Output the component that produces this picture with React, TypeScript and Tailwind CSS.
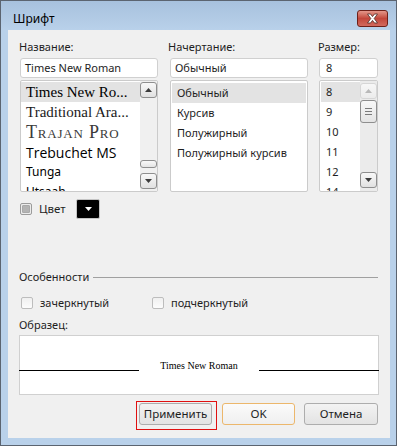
import React from "react";

const UI = "font-['Noto_Sans',sans-serif]";

function Arrow({ up, disabled }: { up?: boolean; disabled?: boolean }) {
  return (
    <div
      className={`w-[17px] h-[16px] rounded-[3px] border flex items-center justify-center ${
        disabled
          ? "border-[#d6d6d6] bg-linear-to-b from-[#f7f7f7] to-[#ececec]"
          : "border-[#8e8e8e] bg-linear-to-b from-[#f8f8f8] to-[#e1e1e1]"
      }`}
    >
      <svg width="7" height="4" viewBox="0 0 7 4">
        {up ? (
          <path d="M0 4 L3.5 0 L7 4 Z" fill={disabled ? "#b9b9b9" : "#3c3c3c"} />
        ) : (
          <path d="M0 0 L3.5 4 L7 0 Z" fill={disabled ? "#b9b9b9" : "#3c3c3c"} />
        )}
      </svg>
    </div>
  );
}

function Check({ filled }: { filled?: boolean }) {
  return (
    <div
      className={`w-[12px] h-[12px] rounded-[2px] border flex items-center justify-center ${
        filled ? "border-[#9b9b9b] bg-[#ececec]" : "border-[#bdbdbd] bg-linear-to-b from-[#f0f0f0] to-[#fcfcfc]"
      }`}
    >
      {filled ? (
        <div className="w-[8px] h-[8px] rounded-[1px] bg-[#b3b3b3] border border-[#a9a9a9]" />
      ) : null}
    </div>
  );
}

function Btn({ children, def, w = "w-[73px]" }: { children: React.ReactNode; def?: boolean; w?: string }) {
  return (
    <div
      className={`${w} h-[22px] rounded-[3px] border flex items-center justify-center text-[11.5px] text-[#1e1e1e] ${
        def
          ? "border-[#ecb76c] bg-linear-to-b from-[#fbfbfb] to-[#efefef]"
          : "border-[#adadad] bg-linear-to-b from-[#f3f3f3] to-[#e3e3e3]"
      }`}
    >
      {children}
    </div>
  );
}

export default function App() {
  const styles = ["Обычный", "Курсив", "Полужирный", "Полужирный курсив"];
  const sizes = ["8", "9", "10", "11", "12", "14"];
  return (
    <div className={`w-[397px] h-[446px] bg-[#b9d1ea] border border-[#5b6470] flex flex-col ${UI}`}>
      {/* title bar */}
      <div className="h-[29px] flex items-start justify-between pl-[12px] pr-[8px] bg-linear-to-b from-[#a7c1dd] to-[#b9d1ea]">
        <div className="mt-[10px] text-[12px] leading-[16px] text-black">Шрифт</div>
        <div className="mt-[9px] w-[31px] h-[17px] rounded-[3px] border border-[#6e2019] flex items-center justify-center bg-linear-to-b from-[#e3968a] via-[#c2463b] to-[#d2695e]">
          <svg width="13" height="11" viewBox="0 0 13 11">
            <path
              d="M1.5 1 L4.5 1 L6.5 3.6 L8.5 1 L11.5 1 L8.2 5.5 L11.5 10 L8.5 10 L6.5 7.4 L4.5 10 L1.5 10 L4.8 5.5 Z"
              fill="#ffffff"
              stroke="#4a2a26"
              strokeWidth="0.8"
              strokeLinejoin="round"
            />
          </svg>
        </div>
      </div>
      {/* client */}
      <div className="ml-[7px] mr-[6px] h-[408px] bg-[#f0f0f0] flex flex-col px-[12px] pt-[9px] text-[11px] text-[#1e1e1e]">
        {/* top columns */}
        <div className="flex">
          {/* name */}
          <div className="w-[138px] flex flex-col">
            <div className="h-[16px] leading-[16px] -ml-px">Название:</div>
            <div className="mt-[3px] h-[20px] border border-[#d0d0d0] rounded-[3px] bg-white flex items-center pl-[4px]">
              Times New Roman
            </div>
            <div className="mt-[2px] h-[112px] border border-[#cbcbcb] rounded-[2px] bg-white flex overflow-hidden">
              <div className="flex-1 pt-px overflow-hidden text-black whitespace-nowrap">
                <div className="h-[20px] bg-[#e3e3e3] flex items-center pl-[5px] font-['Liberation_Serif',serif] text-[15px]">
                  Times New Ro...
                </div>
                <div className="h-[20px] flex items-center pl-[5px] font-['Liberation_Serif',serif] text-[15px] text-[#1a1a1a]">
                  Traditional Ara...
                </div>
                <div className="h-[20px] flex items-center pl-[5px] font-['Liberation_Serif',serif] text-[18px] [font-variant:small-caps] tracking-[0.8px] text-[#3a3a3a]">
                  Trajan Pro
                </div>
                <div className="h-[20px] flex items-center pl-[5px] font-['Open_Sans',sans-serif] text-[14px]">
                  Trebuchet MS
                </div>
                <div className="h-[20px] flex items-center pl-[5px] text-[12px]">Tunga</div>
                <div className="h-[20px] flex items-center pl-[5px] text-[12px]">Utsaah</div>
              </div>
              <div className="w-[17px] flex flex-col pt-px pb-[2px] bg-[#f0f0f0]">
                <Arrow up />
                <div className="flex-1 flex flex-col justify-end pb-[5px]">
                  <div className="h-[8px] rounded-[3px] border border-[#8e8e8e] bg-linear-to-b from-[#f8f8f8] to-[#e4e4e4]" />
                </div>
                <Arrow />
              </div>
            </div>
          </div>
          {/* style */}
          <div className="ml-[12px] w-[138px] flex flex-col">
            <div className="h-[16px] leading-[16px] -ml-[2px]">Начертание:</div>
            <div className="mt-[3px] h-[20px] border border-[#d0d0d0] rounded-[3px] bg-white flex items-center pl-[4px]">
              Обычный
            </div>
            <div className="mt-[2px] h-[112px] border border-[#cbcbcb] rounded-[2px] bg-white pt-[2px] px-px">
              {styles.map((s, i) => (
                <div
                  key={s}
                  className={`h-[20px] flex items-center pl-[5px] ${i === 0 ? "bg-[#e3e3e3]" : ""}`}
                >
                  {s}
                </div>
              ))}
            </div>
          </div>
          {/* size */}
          <div className="ml-[11px] w-[59px] flex flex-col">
            <div className="h-[16px] leading-[16px] -ml-px">Размер:</div>
            <div className="mt-[3px] h-[20px] border border-[#d0d0d0] rounded-[3px] bg-white flex items-center pl-[6px]">
              8
            </div>
            <div className="mt-[2px] h-[112px] border border-[#cbcbcb] rounded-[2px] bg-white flex overflow-hidden">
              <div className="flex-1 pt-px pl-px overflow-hidden">
                {sizes.map((s, i) => (
                  <div
                    key={s}
                    className={`h-[20px] flex items-center pl-[5px] ${i === 0 ? "bg-[#e3e3e3]" : ""}`}
                  >
                    {s}
                  </div>
                ))}
              </div>
              <div className="w-[17px] flex flex-col pt-[2px] pb-[3px] bg-[#ebebeb]">
                <Arrow up disabled />
                <div className="mt-[1px] h-[23px] rounded-[3px] border border-[#8e8e8e] bg-linear-to-b from-[#f8f8f8] to-[#e4e4e4] flex flex-col items-center justify-center gap-[2px]">
                  <div className="w-[7px] h-px bg-[#7a7a7a]" />
                  <div className="w-[7px] h-px bg-[#7a7a7a]" />
                  <div className="w-[7px] h-px bg-[#7a7a7a]" />
                </div>
                <div className="flex-1" />
                <Arrow />
              </div>
            </div>
          </div>
        </div>

        {/* color row */}
        <div className="mt-[7px] h-[20px] flex items-center">
          <Check filled />
          <div className="ml-[7px] w-[37px] text-[11.5px]">Цвет</div>
          <div className="w-[24px] h-[20px] border border-[#c4c4c4] rounded-[2px] bg-black flex items-center justify-center">
            <svg width="7" height="4" viewBox="0 0 7 4">
              <path d="M0 0 L3.5 4 L7 0 Z" fill="#ffffff" />
            </svg>
          </div>
        </div>

        {/* features */}
        <div className="mt-[50px] h-[16px] flex items-center -ml-px">
          <div className="w-[74px] whitespace-nowrap">Особенности</div>
          <div className="flex-1 h-px bg-[#a0a0a0]" />
        </div>
        <div className="mt-[10px] h-[16px] flex items-center">
          <div className="w-[131px] ml-px flex items-center">
            <Check />
            <div className="ml-[7px]">зачеркнутый</div>
          </div>
          <Check />
          <div className="ml-[7px]">подчеркнутый</div>
        </div>
        <div className="mt-[6px] h-[16px] leading-[16px] -ml-px">Образец:</div>
        <div className="mt-[2px] -ml-px w-[360px] h-[60px] border border-[#d0d0d0] bg-white">
          <div className="mt-[24px] -mx-px flex items-end">
            <div className="w-[120px] h-[1.5px] bg-black mb-[1px]" />
            <div className="flex-1 text-center font-['Liberation_Serif',serif] text-[10px] leading-[12px] text-black">
              Times New Roman
            </div>
            <div className="w-[120px] h-[1.5px] bg-black mb-[1px]" />
          </div>
        </div>

        {/* buttons */}
        <div className="mt-[8px] flex justify-end">
          <div className="relative">
            <Btn>Применить</Btn>
            <div className="absolute left-[-3px] top-[-2px] w-[81px] h-[29px] border border-[#e01010] pointer-events-none" />
          </div>
          <div className="ml-[10px]"><Btn def>OK</Btn></div>
          <div className="ml-[9px]"><Btn w="w-[74px]">Отмена</Btn></div>
        </div>
      </div>
    </div>
  );
}
